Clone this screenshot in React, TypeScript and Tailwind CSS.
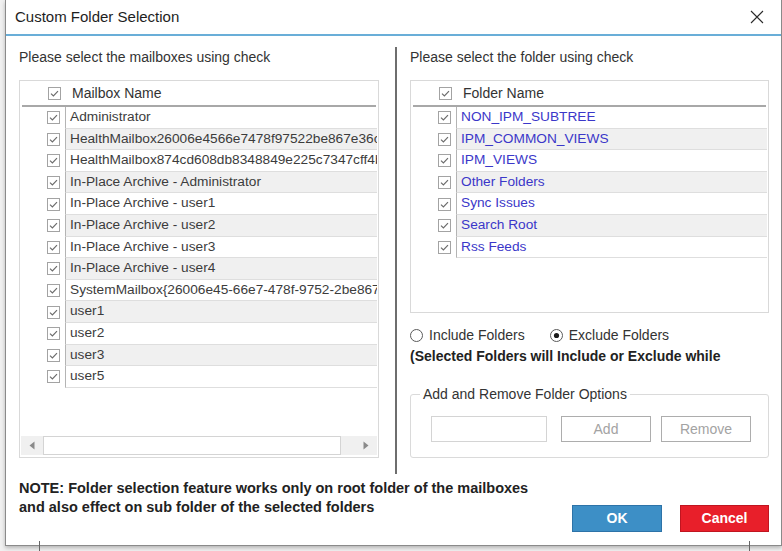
import React from 'react';

const mailboxes = [
  'Administrator',
  'HealthMailbox26006e4566e7478f97522be867e36c7a',
  'HealthMailbox874cd608db8348849e225c7347cff4b2',
  'In-Place Archive - Administrator',
  'In-Place Archive - user1',
  'In-Place Archive - user2',
  'In-Place Archive - user3',
  'In-Place Archive - user4',
  'SystemMailbox{26006e45-66e7-478f-9752-2be867e36c7a}',
  'user1',
  'user2',
  'user3',
  'user5',
];

const folders = ['NON_IPM_SUBTREE', 'IPM_COMMON_VIEWS', 'IPM_VIEWS', 'Other Folders', 'Sync Issues', 'Search Root', 'Rss Feeds'];

function Check() {
  return (
    <svg width="13" height="13" viewBox="0 0 13 13" className="shrink-0">
      <rect x="0.5" y="0.5" width="12" height="12" fill="white" stroke="#a3a3a3" />
      <path d="M3 6.6 L5.4 9 L10 4.2" fill="none" stroke="#6b6b6b" strokeWidth="1.2" />
    </svg>
  );
}

function Radio({ checked }: { checked?: boolean }) {
  return (
    <svg width="13" height="13" viewBox="0 0 13 13" className="shrink-0">
      <circle cx="6.5" cy="6.5" r="6" fill="white" stroke="#5a5a5a" />
      {checked && <circle cx="6.5" cy="6.5" r="2.6" fill="#1a1a1a" />}
    </svg>
  );
}

function ListHeader({ title }: { title: string }) {
  return (
    <div className="mx-[2px] flex h-[26px] shrink-0 items-center border-b-2 border-[#a8a8a8]">
      <div className="w-[26px]" />
      <Check />
      <span className="ml-[11px] text-[14px] text-[#333]">{title}</span>
    </div>
  );
}

function ListRow({ label, shaded, blue }: { label: string; shaded: boolean; blue?: boolean }) {
  return (
    <div className="flex h-[21.6px] shrink-0">
      <div className="flex w-[45px] shrink-0 items-center pl-[27px]">
        <Check />
      </div>
      <div
        className={`flex min-w-0 flex-1 items-center overflow-hidden whitespace-nowrap border-b border-l border-b-[#dedede] border-l-[#b4b4b4] pl-[4px] text-[13.7px] ${
          shaded ? 'bg-[#f0f0f0]' : 'bg-white'
        } ${blue ? 'text-[#3b37c9]' : 'text-[#3c3c3c]'}`}
      >
        {label}
      </div>
    </div>
  );
}

function Arrow({ dir }: { dir: 'left' | 'right' }) {
  return (
    <svg width="6" height="9" viewBox="0 0 6 9">
      <path d={dir === 'left' ? 'M5.5 0.5 L0.5 4.5 L5.5 8.5 Z' : 'M0.5 0.5 L5.5 4.5 L0.5 8.5 Z'} fill="#8a8a8a" />
    </svg>
  );
}

function Button({ label }: { label: string }) {
  return (
    <button className="flex h-[26px] w-[90px] items-center justify-center border border-[#adadad] bg-white text-[14px] text-[#a3a3a3]">
      {label}
    </button>
  );
}

export default function App() {
  return (
    <div className="relative h-[551px] w-[782px] overflow-hidden bg-[#f1f1f1] font-['Liberation_Sans',Arial,sans-serif]">
      <div className="absolute bottom-0 left-[39px] h-[10px] w-px bg-[#666]" />
      <div className="absolute bottom-0 left-[749px] h-[10px] w-px bg-[#666]" />
      <div className="ml-[5px] flex h-[546px] w-[777px] flex-col border-x border-b border-[#8a8a8a] bg-white shadow-[0_2px_4px_rgba(0,0,0,0.25)]">
        {/* title bar */}
        <div className="flex h-[36px] shrink-0 items-center justify-between border-b-2 border-[#69aed8] pl-[9px] pr-[17px]">
          <span className="text-[15px] text-[#1e1e1e]">Custom Folder Selection</span>
          <svg width="14" height="14" viewBox="0 0 14 14">
            <path d="M1 1 L13 13 M13 1 L1 13" stroke="#2b2b2b" strokeWidth="1.1" />
          </svg>
        </div>

        <div className="flex h-[438px] shrink-0">
          {/* mailboxes */}
          <div className="flex w-[389px] shrink-0 flex-col pl-[13px] pt-[13px]">
            <p className="h-[16px] text-[14px] leading-[16px] text-[#333]">Please select the mailboxes using check</p>
            <div className="mt-[15px] flex h-[378px] w-[360px] flex-col border border-[#d9d9d9]">
              <ListHeader title="Mailbox Name" />
              <div className="flex flex-col pr-[1px]">
                {mailboxes.map((m, i) => (
                  <ListRow key={m} label={m} shaded={i % 2 === 1} />
                ))}
              </div>
              <div className="mx-px mb-[2px] mt-auto flex h-[19px] items-stretch bg-[#f0f0f0]">
                <div className="flex w-[22px] items-center justify-center">
                  <Arrow dir="left" />
                </div>
                <div className="w-[298px] border border-[#d4d4d4] bg-white" />
                <div className="flex-1" />
                <div className="flex w-[22px] items-center justify-center">
                  <Arrow dir="right" />
                </div>
              </div>
            </div>
          </div>

          <div className="mt-[11px] h-[427px] w-[2px] shrink-0 bg-[#6e6e6e]" />

          {/* folders */}
          <div className="flex flex-1 flex-col pl-[13px] pt-[13px]">
            <p className="h-[16px] text-[14px] leading-[16px] text-[#333]">Please select the folder using check</p>
            <div className="mt-[15px] flex h-[233px] w-[359px] flex-col border border-[#d9d9d9]">
              <ListHeader title="Folder Name" />
              <div className="flex flex-col pr-[1px]">
                {folders.map((f, i) => (
                  <ListRow key={f} label={f} shaded={i % 2 === 1} blue />
                ))}
              </div>
            </div>

            <div className="mt-[14px] flex h-[16px] items-center text-[14px] text-[#333]">
              <Radio />
              <span className="ml-[6px]">Include Folders</span>
              <span className="ml-[25px]">
                <Radio checked />
              </span>
              <span className="ml-[6px]">Exclude Folders</span>
            </div>
            <p className="mt-[5px] h-[16px] text-[14px] font-bold leading-[16px] text-[#222]">
              (Selected Folders will Include or Exclude while
            </p>

            <fieldset className="mt-[22px] w-[359px] rounded-[3px] border border-[#dadada] pb-[15px] pl-[20px] pt-[14px]">
              <legend className="-ml-[11px] px-[3px] text-[14px] leading-[16px] text-[#333]">Add and Remove Folder Options</legend>
              <div className="flex items-center">
                <div className="h-[26px] w-[116px] border border-[#d4d4d4] bg-white" />
                <div className="ml-[14px]">
                  <Button label="Add" />
                </div>
                <div className="ml-[10px]">
                  <Button label="Remove" />
                </div>
              </div>
            </fieldset>
          </div>
        </div>

        {/* bottom */}
        <div className="flex flex-1 justify-between pl-[13px] pr-[12px]">
          <div className="pt-[5px] text-[14.5px] font-bold leading-[19px] text-[#222]">
            <p>NOTE: Folder selection feature works only on root folder of the mailboxes</p>
            <p>and also effect on sub folder of the selected folders</p>
          </div>
          <div className="mt-[31px] flex gap-[18px] self-start">
            <button className="h-[27px] w-[90px] border border-[#2d73a8] bg-[#3d8fc6] text-[14px] font-bold text-white">OK</button>
            <button className="h-[27px] w-[89px] border border-[#c01520] bg-[#e81f2a] text-[14px] font-bold text-white">Cancel</button>
          </div>
        </div>
      </div>
    </div>
  );
}
